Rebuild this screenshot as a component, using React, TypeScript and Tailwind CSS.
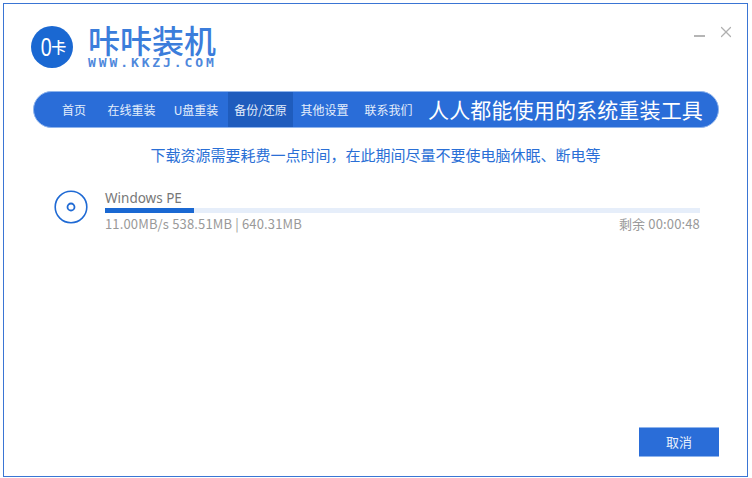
import { X } from "lucide-react";

const cjk = "font-['Microsoft_YaHei','Noto_Sans_CJK_SC',sans-serif]";

const navItems = [
  { label: "首页", width: "w-[64px] pl-[14px]" },
  { label: "在线重装", width: "w-[65px]" },
  { label: "U盘重装", width: "w-[64px]" },
  { label: "备份/还原", width: "w-[65px]", active: true },
  { label: "其他设置", width: "w-[63px]" },
  { label: "联系我们", width: "w-[65px]" },
];

function Logo() {
  return (
    <div className="flex items-center gap-[15px]">
      <div className="flex h-[42px] w-[42px] items-center justify-center rounded-full bg-[#1a68d2] pl-[1px] text-white">
        <span className="-mr-[2px] scale-x-[0.75] font-['Liberation_Sans',sans-serif] text-[26px] leading-none">0</span>
        <span className="text-[15px] font-medium leading-none">卡</span>
      </div>
      <div className="flex w-[129px] flex-col">
        <div className="h-[29px] whitespace-nowrap text-[32px] font-medium leading-[29px] text-[#3b7ddb]">咔咔装机</div>
        <div className="mt-[3px] whitespace-nowrap font-['DejaVu_Sans_Mono',monospace] text-[13px] font-bold leading-[11px] tracking-[2.9px] text-[#4f88dc]">
          WWW.KKZJ.COM
        </div>
      </div>
    </div>
  );
}

function Disc() {
  return (
    <svg width="34" height="34" viewBox="0 0 34 34" fill="none" className="shrink-0">
      <circle cx="17" cy="17" r="15.8" stroke="#1f6ad4" strokeWidth="1.6" />
      <circle cx="17" cy="17" r="3.5" stroke="#1f6ad4" strokeWidth="1.8" />
    </svg>
  );
}

export default function App() {
  return (
    <div className={`h-[478px] w-[752px] bg-white pl-[3px] pt-[3px] ${cjk}`}>
      <div className="flex h-[474px] w-[745px] flex-col border border-[#3a75d4] bg-white">
        {/* header */}
        <div className="flex h-[87px] items-start justify-between pl-[27px] pr-[12px] pt-[21px]">
          <Logo />
          <div className="-mt-[2px] flex items-start gap-[12px]">
            <div className="mt-[12px] h-[2px] w-[11px] bg-[#b5b5b5]" />
            <X size={18} strokeWidth={1.6} className="text-[#b0b0b0]" />
          </div>
        </div>

        {/* nav */}
        <div className="ml-[29px] flex h-[37px] w-[686px] items-stretch overflow-hidden rounded-full border border-[#8fb4ec] bg-[#2a6dd8] pl-[1px]">
          {navItems.map((item) => (
            <div
              key={item.label}
              className={`flex items-center justify-center text-[12px] text-[#e4edfb] ${item.width} ${
                item.active ? "bg-[#1f5cbd]" : ""
              }`}
            >
              {item.label}
            </div>
          ))}
          <div className="flex flex-1 items-center whitespace-nowrap pl-[7px] text-[21px] leading-none tracking-[0.15px] text-white">
            人人都能使用的系统重装工具
          </div>
        </div>

        <div className="mt-[17px] text-center text-[15px] leading-[20px] text-[#2a6fd6]">
          下载资源需要耗费一点时间，在此期间尽量不要使电脑休眠、断电等
        </div>

        {/* download row */}
        <div className="ml-[50px] mt-[24px] flex w-[646px] items-start gap-[17px]">
          <div className="pt-[1px]">
            <Disc />
          </div>
          <div className="flex-1">
            <div className="font-['Noto_Sans',sans-serif] text-[13.5px] leading-[18px] text-[#777]">Windows PE</div>
            <div className="mt-[1px] h-[5px] w-full bg-[#e6eefa]">
              <div className="h-full bg-[#1a68d2]" style={{ width: "15%" }} />
            </div>
            <div className="mt-[3px] flex justify-between text-[13px] leading-[16px] tracking-[0.15px] text-[#999]">
              <span>11.00MB/s 538.51MB | 640.31MB</span>
              <span>剩余 00:00:48</span>
            </div>
          </div>
        </div>

        {/* footer */}
        <div className="mt-auto flex justify-end pb-[19px] pr-[28px]">
          <button className="h-[30px] w-[80px] border-y border-[#8fb4ec] bg-[#2a6dd8] text-[13px] text-[#e8f0fc]">取消</button>
        </div>
      </div>
    </div>
  );
}
